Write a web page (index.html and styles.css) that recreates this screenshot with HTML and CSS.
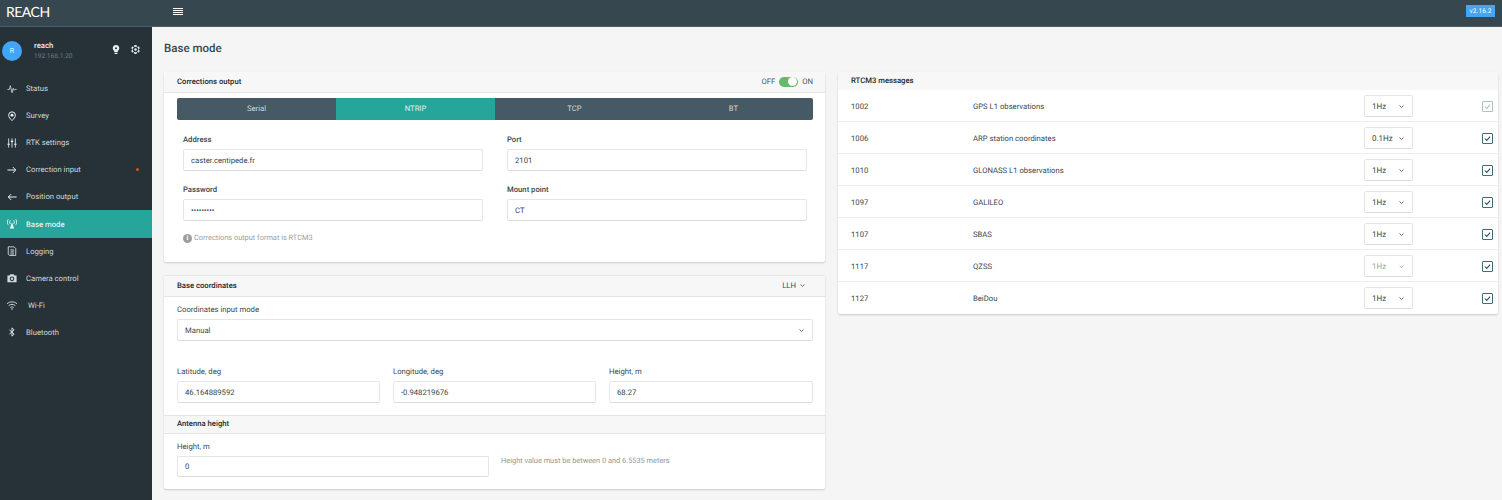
FILE: index.html
```html
<!DOCTYPE html>
<html lang="en">
<head>
    <meta charset="UTF-8">
    <meta name="viewport" content="width=device-width, initial-scale=1.0">
    <title>Reach</title>
    <link rel="stylesheet" href="styles.css">
</head>
<body>
    <header class="topbar">
        <div class="logo">REACH</div>
        <div class="burger"><span></span><span></span><span></span><span></span></div>
        <div class="version">v2.16.2</div>
    </header>

    <div class="layout">
        <aside class="sidebar">
            <div class="user">
                <div class="avatar">R</div>
                <div class="user-info">
                    <div class="user-name">reach</div>
                    <div class="user-ip">192.168.1.20</div>
                </div>
                <svg class="user-icon bulb" viewBox="0 0 24 24"><path fill="#eceff1" d="M12 1a8 8 0 0 0-4.500 14.600V18h9v-2.400A8 8 0 0 0 12 1zM8.500 19.500h7V23h-7z"/><circle cx="12" cy="9" r="2.500" fill="#263238"/></svg>
                <svg class="user-icon gear" viewBox="0 0 24 24"><path fill="#eceff1" fill-rule="evenodd" d="M19.14 12.94c.04-.3.06-.61.06-.94 0-.32-.02-.64-.07-.94l2.03-1.58c.18-.14.23-.41.12-.61l-1.92-3.32c-.12-.22-.37-.29-.59-.22l-2.39.96c-.5-.38-1.03-.7-1.62-.94l-.36-2.54c-.04-.24-.24-.41-.48-.41h-3.84c-.24 0-.43.17-.47.41l-.36 2.54c-.59.24-1.13.57-1.62.94l-2.39-.96c-.22-.08-.47 0-.59.22L2.74 8.87c-.12.21-.08.47.12.61l2.03 1.58c-.05.3-.09.63-.09.94s.02.64.07.94l-2.03 1.58c-.18.14-.23.41-.12.61l1.92 3.32c.12.22.37.29.59.22l2.39-.96c.5.38 1.03.7 1.62.94l.36 2.54c.05.24.24.41.48.41h3.84c.24 0 .44-.17.47-.41l.36-2.54c.59-.24 1.13-.56 1.62-.94l2.39.96c.22.08.47 0 .59-.22l1.92-3.32c.12-.22.07-.47-.12-.61l-2.01-1.58zM12 18a6 6 0 1 1 0-12 6 6 0 0 1 0 12z"/><circle cx="12" cy="12" r="2.800" fill="#eceff1"/></svg>
            </div>

            <nav class="menu">
                <a class="menu-item">
                    <svg class="menu-icon" viewBox="0 0 24 24"><path fill="none" stroke="#cfd8dc" stroke-width="2" d="M1 13h5l2-9 4 17 3-11 2 5 2-2h4"/></svg>
                    Status
                </a>
                <a class="menu-item">
                    <svg class="menu-icon" viewBox="0 0 24 24"><path fill="none" stroke="#eceff1" stroke-width="2.400" d="M12 23c-4-4-8-8-8-13a8 8 0 0 1 16 0c0 5-4 9-8 13z"/><circle cx="12" cy="10" r="3.500" fill="#eceff1"/></svg>
                    Survey
                </a>
                <a class="menu-item">
                    <svg class="menu-icon" viewBox="0 0 24 24"><path fill="none" stroke="#eceff1" stroke-width="2" d="M4 1v22M12 1v22M20 1v22"/><path fill="none" stroke="#eceff1" stroke-width="2.600" d="M1 15h6M9 8h6M17 15h6"/></svg>
                    RTK settings
                </a>
                <a class="menu-item">
                    <svg class="menu-icon" viewBox="0 0 24 24"><path fill="none" stroke="#eceff1" stroke-width="2.400" d="M1 12h20M14 5l7 7-7 7"/></svg>
                    Correction input
                    <span class="menu-dot"></span>
                </a>
                <a class="menu-item">
                    <svg class="menu-icon" viewBox="0 0 24 24"><path fill="none" stroke="#eceff1" stroke-width="2.400" d="M23 12H3M10 5l-7 7 7 7"/></svg>
                    Position output
                </a>
                <a class="menu-item active">
                    <svg class="menu-icon" viewBox="0 0 24 24"><path fill="#fff" d="M12 8l5 15H7z"/><path fill="none" stroke="#fff" stroke-width="2" d="M8 3c-2 3-2 6 0 9M3 1c-3 4-3 9 0 13M16 3c2 3 2 6 0 9M21 1c3 4 3 9 0 13"/></svg>
                    Base mode
                </a>
                <a class="menu-item">
                    <svg class="menu-icon" viewBox="0 0 24 24"><path fill="none" stroke="#cfd8dc" stroke-width="2.200" d="M3 2h14l4 4v17H7l-4-3z"/><path fill="#cfd8dc" d="M8 7h9v15H8z" opacity=".5"/></svg>
                    Logging
                </a>
                <a class="menu-item">
                    <svg class="menu-icon" viewBox="0 0 24 24"><path fill="#cfd8dc" fill-rule="evenodd" d="M8 3L6 6H1v16h22V6h-5l-2-3zm4 5.500a5.500 5.500 0 1 1 0 11 5.500 5.500 0 0 1 0-11zm0 2.500a3 3 0 1 0 0 6 3 3 0 0 0 0-6z"/></svg>
                    Camera control
                </a>
                <a class="menu-item wifi">
                    <svg class="menu-icon" viewBox="0 0 24 24"><path fill="none" stroke="#eceff1" stroke-width="2" d="M0 9c7-6 17-6 24 0M4 13.500c5-4 11-4 16 0M8 18c2.500-2 5.500-2 8 0"/><circle cx="12" cy="21.500" r="1.600" fill="#eceff1"/></svg>
                    Wi-Fi
                </a>
                <a class="menu-item">
                    <svg class="menu-icon" viewBox="0 0 24 24"><path fill="none" stroke="#eceff1" stroke-width="2.200" d="M6 7l11 10-5 5V2l5 5L6 17"/></svg>
                    Bluetooth
                </a>
            </nav>
        </aside>

        <main class="content">
            <h1 class="page-title">Base mode</h1>
            <div class="columns">
                <div class="column">
                    <section class="card">
                        <div class="card-head">
                            <span class="card-title">Corrections output</span>
                            <div class="toggle-wrap">
                                <span>OFF</span>
                                <span class="toggle"><span class="knob"></span></span>
                                <span>ON</span>
                            </div>
                        </div>
                        <div class="tabs">
                            <div class="tab">Serial</div>
                            <div class="tab active">NTRIP</div>
                            <div class="tab">TCP</div>
                            <div class="tab">BT</div>
                        </div>
                        <div class="fields">
                            <div class="field">
                                <label>Address</label>
                                <input type="text" value="caster.centipede.fr">
                            </div>
                            <div class="field">
                                <label>Port</label>
                                <input type="text" value="2101">
                            </div>
                            <div class="field">
                                <label>Password</label>
                                <input type="password" value="centipede">
                            </div>
                            <div class="field">
                                <label>Mount point</label>
                                <input type="text" value="CT">
                            </div>
                        </div>
                        <div class="info">
                            <span class="info-icon">i</span>
                            Corrections output format is RTCM3
                        </div>
                    </section>

                    <section class="card card-coords">
                        <div class="card-head">
                            <span class="card-title">Base coordinates</span>
                            <span class="format">LLH
                                <svg class="chevron" viewBox="0 0 10 6"><path d="M1 1l4 4 4-4"/></svg>
                            </span>
                        </div>
                        <div class="coords">
                            <label class="plain-label">Coordinates input mode</label>
                            <div class="select wide">
                                <span>Manual</span>
                                <svg class="chevron" viewBox="0 0 10 6"><path d="M1 1l4 4 4-4"/></svg>
                            </div>
                            <div class="coord-row">
                                <div>
                                    <label class="plain-label">Latitude, deg</label>
                                    <input type="text" value="46.164889592">
                                </div>
                                <div>
                                    <label class="plain-label">Longitude, deg</label>
                                    <input type="text" value="-0.948219676">
                                </div>
                                <div>
                                    <label class="plain-label">Height, m</label>
                                    <input type="text" value="68.27">
                                </div>
                            </div>
                        </div>
                        <div class="sub-head">Antenna height</div>
                        <div class="antenna">
                            <label class="plain-label">Height, m</label>
                            <div class="antenna-row">
                                <input type="text" value="0">
                                <span class="hint">Height value must be between 0 and 6.5535 meters</span>
                            </div>
                        </div>
                    </section>
                </div>

                <section class="card messages">
                    <div class="card-head short">
                        <span class="card-title">RTCM3 messages</span>
                    </div>
                    <div class="msg-row">
                        <span>1002</span>
                        <span>GPS L1 observations</span>
                        <div class="select small"><span>1Hz</span><svg class="chevron" viewBox="0 0 10 6"><path d="M1 1l4 4 4-4"/></svg></div>
                        <span class="check disabled"><svg viewBox="0 0 12 12"><path d="M2.500 6l2.500 2.500 4.500-5"/></svg></span>
                    </div>
                    <div class="msg-row">
                        <span>1006</span>
                        <span>ARP station coordinates</span>
                        <div class="select small"><span>0.1Hz</span><svg class="chevron" viewBox="0 0 10 6"><path d="M1 1l4 4 4-4"/></svg></div>
                        <span class="check"><svg viewBox="0 0 12 12"><path d="M2.500 6l2.500 2.500 4.500-5"/></svg></span>
                    </div>
                    <div class="msg-row">
                        <span>1010</span>
                        <span>GLONASS L1 observations</span>
                        <div class="select small"><span>1Hz</span><svg class="chevron" viewBox="0 0 10 6"><path d="M1 1l4 4 4-4"/></svg></div>
                        <span class="check"><svg viewBox="0 0 12 12"><path d="M2.500 6l2.500 2.500 4.500-5"/></svg></span>
                    </div>
                    <div class="msg-row">
                        <span>1097</span>
                        <span>GALILEO</span>
                        <div class="select small"><span>1Hz</span><svg class="chevron" viewBox="0 0 10 6"><path d="M1 1l4 4 4-4"/></svg></div>
                        <span class="check"><svg viewBox="0 0 12 12"><path d="M2.500 6l2.500 2.500 4.500-5"/></svg></span>
                    </div>
                    <div class="msg-row">
                        <span>1107</span>
                        <span>SBAS</span>
                        <div class="select small"><span>1Hz</span><svg class="chevron" viewBox="0 0 10 6"><path d="M1 1l4 4 4-4"/></svg></div>
                        <span class="check"><svg viewBox="0 0 12 12"><path d="M2.500 6l2.500 2.500 4.500-5"/></svg></span>
                    </div>
                    <div class="msg-row">
                        <span>1117</span>
                        <span>QZSS</span>
                        <div class="select small muted"><span>1Hz</span><svg class="chevron" viewBox="0 0 10 6"><path d="M1 1l4 4 4-4"/></svg></div>
                        <span class="check"><svg viewBox="0 0 12 12"><path d="M2.500 6l2.500 2.500 4.500-5"/></svg></span>
                    </div>
                    <div class="msg-row">
                        <span>1127</span>
                        <span>BeiDou</span>
                        <div class="select small"><span>1Hz</span><svg class="chevron" viewBox="0 0 10 6"><path d="M1 1l4 4 4-4"/></svg></div>
                        <span class="check"><svg viewBox="0 0 12 12"><path d="M2.500 6l2.500 2.500 4.500-5"/></svg></span>
                    </div>
                </section>
            </div>
        </main>
    </div>
</body>
</html>
```

FILE: styles.css
```css
* {
    box-sizing: border-box;
}
body {
    font-family: Roboto, sans-serif;
    font-size: 7.7px;
    text-rendering: geometricPrecision;
    color: #37474f;
    background-color: #f5f5f5;
    margin: 0;
    height: 500px;
    overflow: hidden;
}
.topbar {
    display: flex;
    align-items: center;
    height: 27px;
    background: #37474f;
    border-bottom: 1px solid #4f5f66;
    padding: 0 7px 4px 0;
}
.logo {
    width: 173px;
    padding-left: 6px;
    font-family: Lato, sans-serif;
    font-size: 14px;
    color: #fff;
    letter-spacing: -0.5px;
}
.burger {
    display: flex;
    flex-direction: column;
    gap: 1px;
    width: 10px;
}
.burger span {
    height: 1px;
    background: #fff;
}
.version {
    margin-left: auto;
    background: #42a5f5;
    color: #fff;
    font-size: 6.5px;
    line-height: 12px;
    padding: 0 3.5px;
    letter-spacing: 0.1px;
}
.layout {
    display: flex;
    height: 473px;
}
.sidebar {
    width: 152px;
    background: #263238;
    color: #cfd8dc;
    flex-shrink: 0;
}
.user {
    display: flex;
    align-items: center;
    height: 47px;
    padding-left: 2px;
}
.avatar {
    width: 20px;
    height: 20px;
    border-radius: 50%;
    background: #42a5f5;
    color: #dff;
    text-align: center;
    line-height: 20px;
    font-size: 7px;
}
.user-info {
    width: 77px;
    margin-left: 12px;
}
.user-name {
    font-weight: 500;
    color: #eceff1;
    line-height: 11px;
}
.user-ip {
    color: #6f7c82;
    font-size: 6.6px;
    line-height: 11px;
}
.user-icon.bulb {
    width: 10px;
    height: 11px;
    margin-bottom: 2px;
}
.user-icon.gear {
    width: 11px;
    height: 11px;
    margin: 0 0 2px 9px;
}
.menu {
    padding-top: 1px;
}
.menu-item {
    display: flex;
    align-items: center;
    height: 27.1px;
    padding-left: 7px;
}
.menu-item.active {
    background: #26a69a;
    color: #fff;
}
.menu-icon {
    width: 10px;
    height: 10px;
    margin-right: 9px;
    flex-shrink: 0;
}
.menu-item.wifi .menu-icon {
    margin-right: 11px;
}
.menu-dot {
    width: 3px;
    height: 3px;
    border-radius: 50%;
    background: #e65100;
    margin: 0 13px 0 auto;
}
.content {
    flex: 1;
    padding: 0 4px 0 12px;
    min-width: 0;
}
.page-title {
    font-size: 11.5px;
    font-weight: 500;
    color: #37474f;
    margin: 0;
    height: 45px;
    line-height: 43px;
}
.columns {
    display: grid;
    grid-template-columns: 661px 660px;
    gap: 13px;
    align-items: start;
}
.card {
    background: #fff;
    box-shadow: 0 1px 2px rgba(0, 0, 0, 0.18);
    border-radius: 2px;
}
.card-coords {
    margin-top: 13px;
    border-top: 1px solid #e8e8e8;
    padding-bottom: 12px;
}
.card-head {
    display: flex;
    align-items: center;
    justify-content: space-between;
    height: 21px;
    padding: 0 12px 1px 13px;
    background: #f7f7f7;
    border-bottom: 1px solid #e6e6e6;
}
.card-head.short {
    height: 18px;
    border-bottom: none;
}
.card-title {
    font-weight: 500;
    color: #1c262b;
}
.toggle-wrap {
    display: flex;
    align-items: center;
    gap: 4px;
    color: #455a64;
}
.toggle {
    display: flex;
    justify-content: flex-end;
    width: 19px;
    height: 10px;
    border-radius: 5px;
    background: #66bb6a;
    padding: 0.5px 1px;
}
.knob {
    width: 9px;
    height: 9px;
    border-radius: 50%;
    background: #fff;
}
.tabs {
    display: grid;
    grid-template-columns: repeat(4, 159px);
    margin: 5px 12px 0 13px;
    height: 22px;
    background: #455a64;
    color: #cfd8dc;
    border-radius: 2px;
    overflow: hidden;
}
.tab {
    text-align: center;
    line-height: 22px;
}
.tab.active {
    background: #26a69a;
    color: #e0f2f1;
}
.fields {
    display: grid;
    grid-template-columns: 300px 300px;
    column-gap: 24px;
    row-gap: 13px;
    padding: 14px 0 0 19px;
}
label {
    display: block;
    font-weight: 500;
    padding-top: 1px;
    line-height: 10px;
    margin-bottom: 4px;
    color: #37474f;
}
.plain-label {
    font-weight: 400;
}
input {
    display: block;
    width: 100%;
    height: 22px;
    font-family: Roboto, sans-serif;
    font-size: 7.7px;
    text-rendering: geometricPrecision;
    color: #37474f;
    background: #fff;
    padding: 0 7px;
    border: 1px solid #e6e6e6;
    border-bottom-color: #dcdcdc;
    border-radius: 2px;
    outline: none;
}
.info {
    display: flex;
    align-items: center;
    gap: 2px;
    margin: 11px 0 0 19px;
    padding-bottom: 18px;
    color: #9e9e9e;
    font-size: 7.4px;
    line-height: 12px;
}
.info-icon {
    width: 9px;
    height: 9px;
    border-radius: 50%;
    background: #9e9e9e;
    color: #fff;
    font-size: 7px;
    font-weight: 700;
    line-height: 9px;
    text-align: center;
}
.format {
    display: flex;
    align-items: center;
    gap: 4px;
    padding-right: 8px;
    color: #34495e;
}
.chevron {
    width: 5px;
    height: 3px;
    fill: none;
    stroke: #37474f;
    stroke-width: 1.6;
}
.coords {
    padding: 7px 12px 12px 13px;
}
.select {
    display: flex;
    align-items: center;
    justify-content: space-between;
    height: 22px;
    background: #fff;
    border: 1px solid #e6e6e6;
    border-bottom-color: #dcdcdc;
    border-radius: 2px;
    padding: 0 8px 0 7px;
    color: #37474f;
}
.select.small {
    width: 49px;
    font-size: 8px;
}
.select.muted {
    color: #9aa5ab;
}
.select.muted .chevron {
    stroke: #aab4b9;
}
.coord-row {
    display: grid;
    grid-template-columns: 203px 203px 204px;
    gap: 13px;
    margin-top: 25px;
}
.sub-head {
    height: 19px;
    line-height: 16px;
    padding-left: 13px;
    background: #f7f7f7;
    border-top: 1px solid #e6e6e6;
    border-bottom: 1px solid #e6e6e6;
    font-weight: 500;
    color: #1c262b;
}
.antenna {
    padding: 7px 12px 0 13px;
}
.antenna-row {
    display: flex;
    align-items: center;
    gap: 12px;
}
.antenna-row input {
    width: 312px;
    height: 21px;
}
.hint {
    color: #90979b;
    font-size: 7.4px;
    margin-bottom: 12px;
}
.msg-row {
    display: grid;
    grid-template-columns: 122px 391px 118px 11px;
    align-items: center;
    height: 32px;
    padding: 1px 0 0 13px;
    border-bottom: 1px solid #eeeeee;
}
.msg-row:last-child {
    border-bottom-color: transparent;
}
.check {
    display: block;
    width: 11px;
    height: 11px;
    border: 1.2px solid #456b80;
    border-radius: 1px;
}
.check svg {
    display: block;
    width: 9px;
    height: 9px;
    fill: none;
    stroke: #37474f;
    stroke-width: 1.4;
}
.check.disabled {
    border-color: #b0bec5;
}
.check.disabled svg {
    stroke: #b0bec5;
}
```
